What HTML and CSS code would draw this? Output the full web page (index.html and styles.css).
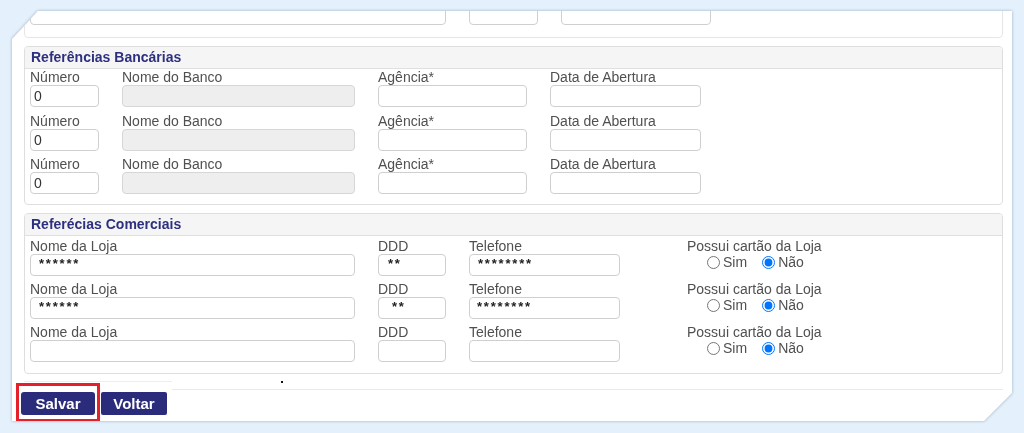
FILE: index.html
```html
<!DOCTYPE html>
<html lang="pt">
<head>
<meta charset="utf-8">
<title>Referências</title>
<link rel="stylesheet" href="styles.css">
</head>
<body>
<div class="page">
  <div class="card-wrap">
    <div class="card">
      <div class="section partial">
        <div class="grid g-top">
          <input class="inp" type="text" value="">
          <input class="inp" type="text" value="">
          <input class="inp" type="text" value="">
        </div>
      </div>

      <div class="section">
        <div class="sec-head">Referências Bancárias</div>
        <div class="sec-body bank">
          <div class="grid g-bank">
            <div class="field"><label>Número</label><input class="inp" type="text" value="0"></div>
            <div class="field"><label>Nome do Banco</label><input class="inp dis" type="text" value="" disabled></div>
            <div class="field"><label>Agência*</label><input class="inp" type="text" value=""></div>
            <div class="field"><label>Data de Abertura</label><input class="inp" type="text" value=""></div>

            <div class="field"><label>Número</label><input class="inp" type="text" value="0"></div>
            <div class="field"><label>Nome do Banco</label><input class="inp dis" type="text" value="" disabled></div>
            <div class="field"><label>Agência*</label><input class="inp" type="text" value=""></div>
            <div class="field"><label>Data de Abertura</label><input class="inp" type="text" value=""></div>

            <div class="field"><label>Número</label><input class="inp" type="text" value="0"></div>
            <div class="field"><label>Nome do Banco</label><input class="inp dis" type="text" value="" disabled></div>
            <div class="field"><label>Agência*</label><input class="inp" type="text" value=""></div>
            <div class="field"><label>Data de Abertura</label><input class="inp" type="text" value=""></div>
          </div>
        </div>
      </div>

      <div class="section com">
        <div class="sec-head">Referécias Comerciais</div>
        <div class="sec-body comm">
          <div class="grid g-com">
            <div class="field"><label>Nome da Loja</label><input class="inp mask p8" type="text" value="******"></div>
            <div class="field"><label>DDD</label><input class="inp mask p9" type="text" value="**"></div>
            <div class="field"><label>Telefone</label><input class="inp mask p8" type="text" value="********"></div>
            <div class="field possui"><label>Possui cartão da Loja</label>
              <div class="radios"><input type="radio" name="c1"><span class="rl">Sim</span><input type="radio" name="c1" checked><span class="rl">Não</span></div>
            </div>

            <div class="field"><label>Nome da Loja</label><input class="inp mask p8" type="text" value="******"></div>
            <div class="field"><label>DDD</label><input class="inp mask p13" type="text" value="**"></div>
            <div class="field"><label>Telefone</label><input class="inp mask p7" type="text" value="********"></div>
            <div class="field possui"><label>Possui cartão da Loja</label>
              <div class="radios"><input type="radio" name="c2"><span class="rl">Sim</span><input type="radio" name="c2" checked><span class="rl">Não</span></div>
            </div>

            <div class="field"><label>Nome da Loja</label><input class="inp" type="text" value=""></div>
            <div class="field"><label>DDD</label><input class="inp" type="text" value=""></div>
            <div class="field"><label>Telefone</label><input class="inp" type="text" value=""></div>
            <div class="field possui"><label>Possui cartão da Loja</label>
              <div class="radios"><input type="radio" name="c3"><span class="rl">Sim</span><input type="radio" name="c3" checked><span class="rl">Não</span></div>
            </div>
          </div>
        </div>
      </div>

      <div class="footer">
        <div class="footer-left">
          <div class="hl"><button class="btn salvar" type="button">Salvar</button></div>
          <button class="btn voltar" type="button">Voltar</button>
        </div>
        <div class="footer-right">
          <span class="dot"></span>
          <div class="fline"></div>
        </div>
      </div>
    </div>
  </div>
</div>
</body>
</html>
```

FILE: styles.css
```css
* { box-sizing: border-box; }
html, body { margin: 0; padding: 0; }
body {
  background: #e4f0fb;
  font-family: "Liberation Sans", Arial, sans-serif;
  font-size: 14px;
  color: #505050;
  width: 1024px;
  height: 433px;
  overflow: hidden;
}
.page { padding: 11px 12px 0 12px; }
.card-wrap {
  width: 1000px;
  filter: drop-shadow(0 0 1.5px rgba(60, 90, 120, 0.45));
}
.card {
  background: #fff;
  height: 410px;
  overflow: hidden;
  padding: 0 9px 0 12px;
  clip-path: polygon(26px 0, 100% 0, 100% calc(100% - 28px), calc(100% - 28px) 100%, 0 100%, 0 28px);
}
.section {
  border: 1px solid #dedede;
  border-radius: 4px;
  margin-top: 8px;
}
.section.partial {
  margin-top: -20px;
  padding: 11px 5px 12px 5px;
  border-color: #e6e6e6;
}
.sec-head {
  background: #f5f5f5;
  border-bottom: 1px solid #e0e0e0;
  height: 22px;
  line-height: 21px;
  padding: 0 6px;
  font-weight: bold;
  font-size: 14px;
  color: #2d2f7f;
  border-radius: 3px 3px 0 0;
}
.sec-body { padding: 0 5px 10px 5px; }
.sec-body.comm { padding: 2px 5px 11px 5px; }
.grid { display: grid; column-gap: 23px; }
.g-top { grid-template-columns: 416px 69px 150px; }
.g-bank { grid-template-columns: 69px 233px 149px 151px; row-gap: 5.5px; }
.g-com { grid-template-columns: 325px 68px 151px 300px; row-gap: 5px; }
.field { display: flex; flex-direction: column; }
.field label {
  display: block;
  height: 16px;
  line-height: 16px;
  font-size: 14px;
  color: #505050;
}
.inp {
  display: block;
  width: 100%;
  height: 22px;
  border: 1px solid #cfcfcf;
  border-radius: 4px;
  padding: 0 3px;
  margin: 0;
  font-family: "Liberation Sans", Arial, sans-serif;
  font-size: 14px;
  color: #333;
  background: #fff;
  outline: none;
}
.inp.dis { background: #eeeeee; border-color: #d6d6d6; }
.inp.mask {
  letter-spacing: 1.8px;
  font-weight: bold;
  color: #222;
  font-size: 13px;
  padding-bottom: 3px;
}
.p7 { padding-left: 7px !important; }
.p8 { padding-left: 8px !important; }
.p9 { padding-left: 9px !important; }
.p13 { padding-left: 13px !important; }
.possui { margin-left: 44px; }
.radios {
  display: flex;
  align-items: center;
  height: 16px;
  padding-left: 15px;
}
.radios input[type="radio"] {
  width: 13px;
  height: 13px;
  margin: 0 3px 0 5px;
}
.rl { font-size: 14px; line-height: 16px; color: #505050; margin-right: 10px; }
.footer {
  display: flex;
  margin-top: 7px;
}
.footer-left {
  width: 148px;
  display: flex;
  align-items: flex-start;
  border-top: 1px solid #eeeeee;
  padding-top: 1px;
}
.hl {
  margin-left: -8px;
  border: 3px solid #e4202a;
  padding: 6px 2px 4px 2px;
}
.btn {
  display: block;
  height: 23px;
  margin: 0;
  padding: 0;
  border: none;
  border-radius: 3px;
  background: #2b2b7b;
  color: #fff;
  font-family: "Liberation Sans", Arial, sans-serif;
  font-weight: bold;
  font-size: 15px;
  line-height: 23px;
  text-align: center;
}
.salvar { width: 74px; }
.voltar { width: 66px; margin-top: 9px; margin-left: 1px; border-radius: 2px; }
.footer-right { flex: 1; }
.dot {
  display: block;
  width: 2px;
  height: 2px;
  background: #111;
  margin-left: 109px;
}
.fline {
  margin-top: 6px;
  border-top: 1px solid #eaeaea;
}
```
